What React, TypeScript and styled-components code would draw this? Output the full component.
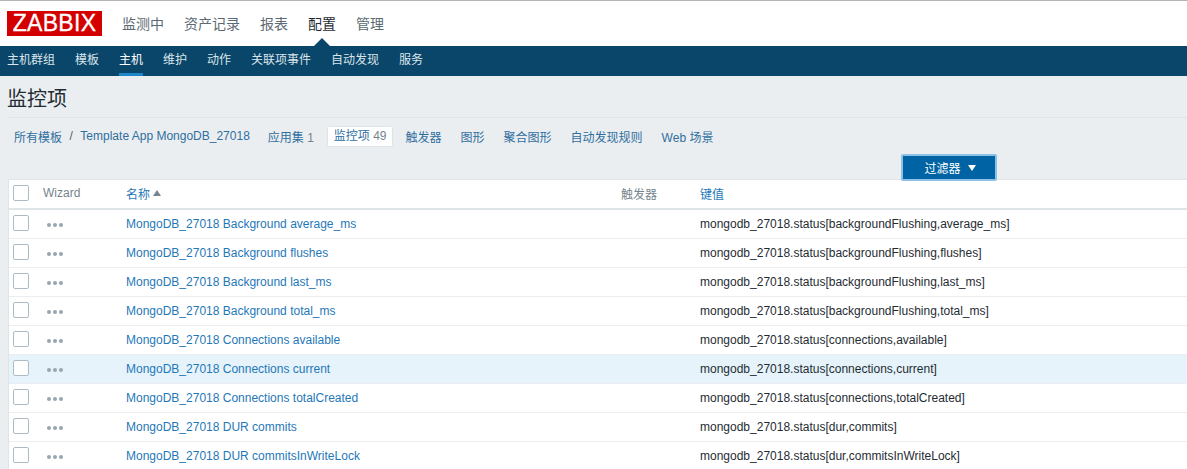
import React from 'react';
import styled, { createGlobalStyle } from 'styled-components';

const mainMenu = ['监测中', '资产记录', '报表', '配置', '管理'];
const subMenu = ['主机群组', '模板', '主机', '维护', '动作', '关联项事件', '自动发现', '服务'];
const rows = [
  ['Background average_ms', 'backgroundFlushing,average_ms'],
  ['Background flushes', 'backgroundFlushing,flushes'],
  ['Background last_ms', 'backgroundFlushing,last_ms'],
  ['Background total_ms', 'backgroundFlushing,total_ms'],
  ['Connections available', 'connections,available'],
  ['Connections current', 'connections,current'],
  ['Connections totalCreated', 'connections,totalCreated'],
  ['DUR commits', 'dur,commits'],
  ['DUR commitsInWriteLock', 'dur,commitsInWriteLock'],
];

const App = () => {
  return (
    <Page>
      <GlobalStyle />
      <TopBar>
        <Logo>ZABBIX</Logo>
        <MainNav>
          {mainMenu.map((m) => (
            <MainItem key={m} $active={m === '配置'}>
              {m}
            </MainItem>
          ))}
        </MainNav>
      </TopBar>
      <SubNav>
        {subMenu.map((m) => (
          <SubItem key={m} $active={m === '主机'}>
            {m}
          </SubItem>
        ))}
      </SubNav>
      <Title>监控项</Title>
      <Tabs>
        <Crumb>所有模板</Crumb>
        <Slash>/</Slash>
        <Crumb>Template App MongoDB_27018</Crumb>
        <Tab>
          应用集 <Count>1</Count>
        </Tab>
        <ActiveTab>
          监控项 <Count>49</Count>
        </ActiveTab>
        <PlainTab>触发器</PlainTab>
        <PlainTab>图形</PlainTab>
        <PlainTab>聚合图形</PlainTab>
        <PlainTab>自动发现规则</PlainTab>
        <PlainTab>Web 场景</PlainTab>
      </Tabs>
      <FilterRow>
        <FilterButton>
          过滤器
          <Caret />
        </FilterButton>
      </FilterRow>
      <Table>
        <HeadRow>
          <CheckCell>
            <Check />
          </CheckCell>
          <WizardHead>Wizard</WizardHead>
          <NameCell>
            <HeadLink>名称</HeadLink>
            <SortUp />
          </NameCell>
          <TriggerHead>触发器</TriggerHead>
          <HeadLink>键值</HeadLink>
        </HeadRow>
        {rows.map(([name, key]) => (
          <Row key={name} $hover={name === 'Connections current'}>
            <RowCheckCell>
              <Check />
            </RowCheckCell>
            <WizardCell>
              <Dots>
                <i />
                <i />
                <i />
              </Dots>
            </WizardCell>
            <NameCell>
              <ItemLink>MongoDB_27018 {name}</ItemLink>
            </NameCell>
            <TriggerCell />
            <KeyCell>mongodb_27018.status[{key}]</KeyCell>
          </Row>
        ))}
      </Table>
    </Page>
  );
};

const GlobalStyle = createGlobalStyle`
  html, body {
    margin: 0;
    padding: 0;
    height: 100%;
    overflow: hidden;
    background: #ebeef0;
  }
`;

const Page = styled.div`
  height: 469px;
  overflow: hidden;
  background: #ebeef0;
  font-family: 'Liberation Sans', 'Noto Sans CJK SC', sans-serif;
  font-size: 12px;
  color: #1f2c33;
`;

const TopBar = styled.div`
  display: flex;
  align-items: flex-start;
  height: 45px;
  padding-left: 7px;
  background: #fff;
  border-top: 1px solid #b4b4b4;
`;

const Logo = styled.div`
  width: 95px;
  height: 25px;
  margin-top: 10px;
  background: #d40000;
  color: #fff;
  font-size: 23px;
  line-height: 25px;
  text-align: center;
  letter-spacing: 0.3px;
  -webkit-text-stroke: 0.3px #fff;
`;

const MainNav = styled.div`
  display: flex;
  gap: 20px;
  margin-left: 20px;
  padding-top: 14px;
`;

const MainItem = styled.span<{ $active?: boolean }>`
  position: relative;
  font-size: 14px;
  line-height: 18px;
  color: ${(p) => (p.$active ? '#1f2c33' : '#5b6a73')};

  &::after {
    content: '';
    display: ${(p) => (p.$active ? 'block' : 'none')};
    position: absolute;
    left: 50%;
    bottom: -13px;
    margin-left: -8px;
    border: 8px solid transparent;
    border-top: 0;
    border-bottom-color: #0a466a;
  }
`;

const SubNav = styled.div`
  display: flex;
  gap: 20px;
  height: 30px;
  padding-left: 7px;
  background: #0a466a;
`;

const SubItem = styled.span<{ $active?: boolean }>`
  height: 27px;
  line-height: 29px;
  color: ${(p) => (p.$active ? '#fff' : '#dbe5ea')};
  border-bottom: 3px solid ${(p) => (p.$active ? '#1c86c6' : 'transparent')};
`;

const Title = styled.h1`
  margin: 0 0 0 7px;
  padding-top: 10px;
  height: 31px;
  font-size: 20px;
  line-height: 27px;
  font-weight: 400;
  color: #1f2c33;
  border-bottom: 1px solid #dfe4e7;
`;

const Tabs = styled.div`
  display: flex;
  align-items: center;
  height: 36px;
  padding-left: 14px;
  color: #4a6a82;
`;

const Crumb = styled.span`
  color: #2f6f9f;
  white-space: nowrap;
`;

const Slash = styled.span`
  margin: 0 7.5px;
  color: #4f5f68;
`;

const PlainTab = styled.span`
  margin-right: 19px;
  color: #2f6f9f;
  white-space: nowrap;
`;

const Tab = styled.span`
  margin: 0 13px 0 18px;
  color: #2f6f9f;
  white-space: nowrap;
`;

const ActiveTab = styled.span`
  box-sizing: border-box;
  height: 21px;
  line-height: 19px;
  margin-right: 13px;
  padding: 0 5px 0 6px;
  background: #fff;
  border: 1px solid #dfe4e7;
  border-radius: 2px;
  color: #2f6f9f;
  white-space: nowrap;
`;

const Count = styled.span`
  color: #76848c;
`;

const FilterRow = styled.div`
  display: flex;
  justify-content: flex-end;
  height: 27px;
  margin-bottom: -2px;
  padding-right: 190px;
  position: relative;
`;

const FilterButton = styled.div`
  box-sizing: border-box;
  display: flex;
  align-items: center;
  justify-content: center;
  gap: 7px;
  width: 96px;
  height: 27px;
  padding-left: 2px;
  background: #0064a4;
  border: 2px solid #8cc0e6;
  border-radius: 2px;
  color: #fff;
`;

const Caret = styled.span`
  border: 4px solid transparent;
  border-top: 6px solid #fff;
  border-bottom: 0;
  margin-top: 1px;
`;

const Table = styled.div`
  margin-left: 8px;
  background: #fff;
  border-top: 1px solid #dfe4e7;
  border-left: 1px solid #dfe4e7;
`;

const HeadRow = styled.div`
  display: flex;
  align-items: center;
  height: 26px;
  padding-bottom: 2px;
  border-bottom: 2px solid #dfe4e7;
`;

const Row = styled.div<{ $hover?: boolean }>`
  display: flex;
  align-items: center;
  height: 28px;
  background: ${(p) => (p.$hover ? '#e6f3fb' : '#fff')};
  border-bottom: 1px solid #ebeef0;
`;

const CheckCell = styled.div`
  flex: 0 0 34px;
  padding-left: 4px;
  box-sizing: border-box;
  display: flex;
`;

const RowCheckCell = styled(CheckCell)`
  margin-bottom: 2px;
`;

const Check = styled.span`
  box-sizing: border-box;
  width: 16px;
  height: 16px;
  background: #fff;
  border: 1px solid #acbbc4;
  border-radius: 2px;
`;

const WizardHead = styled.div`
  flex: 0 0 83px;
  color: #76848c;
`;

const WizardCell = styled.div`
  flex: 0 0 83px;
  padding-left: 4px;
  box-sizing: border-box;
`;

const Dots = styled.span`
  display: flex;
  gap: 2px;
  margin-top: 1px;

  i {
    width: 4px;
    height: 4px;
    border-radius: 50%;
    background: #98a6ae;
  }
`;

const NameCell = styled.div`
  flex: 0 0 495px;
  display: flex;
  align-items: center;
  gap: 3px;
`;

const HeadLink = styled.span`
  color: #1f78b8;
`;

const SortUp = styled.span`
  border: 4px solid transparent;
  border-top: 0;
  border-bottom: 6px solid #76848c;
`;

const TriggerHead = styled.div`
  flex: 0 0 79px;
  color: #76848c;
`;

const TriggerCell = styled.div`
  flex: 0 0 79px;
`;

const ItemLink = styled.span`
  color: #1f78b8;
  white-space: nowrap;
`;

const KeyCell = styled.div`
  color: #1f2c33;
  white-space: nowrap;
`;

export default App;
